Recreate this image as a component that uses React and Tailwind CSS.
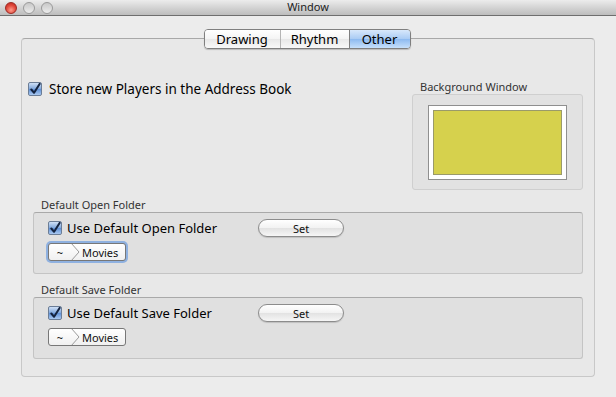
import React from 'react';

const font = { fontFamily: '"Noto Sans", "DejaVu Sans", sans-serif' };

const Light = ({ red }) => (
    <div
        className={
            red
                ? 'w-[12px] h-[12px] rounded-full border border-[#9c2a24] bg-[radial-gradient(circle_at_50%_70%,#ff9c8c,#e0473a_55%,#b8261c)]'
                : 'w-[12px] h-[12px] rounded-full border border-[#9a9a9a] bg-[linear-gradient(#c8c8c8,#ececec)]'
        }
    />
);

const Check = () => (
    <div className="w-[14px] h-[14px] rounded-[2px] border border-[#6b7d96] bg-[linear-gradient(#cfe0f6,#7fa7dc_50%,#5d8fd6_51%,#a9c8f0)] flex items-center justify-center shrink-0">
        <svg width="13" height="13" viewBox="0 0 13 13">
            <path d="M2.5 6.5 L5.5 10 L11.5 0.5" fill="none" stroke="#14233f" strokeWidth="2.2" strokeLinecap="round" strokeLinejoin="round" />
        </svg>
    </div>
);

const SetButton = () => (
    <button className="w-[86px] h-[18px] rounded-full border border-[#8c8c8c] bg-[linear-gradient(#ffffff,#f2f2f2_50%,#e2e2e2_51%,#f6f6f6)] text-[11px] leading-none text-[#111] shadow-[0_1px_1px_rgba(0,0,0,0.15)]">
        Set
    </button>
);

const PathControl = ({ focused }) => (
    <div className={focused ? 'p-[2px] rounded-[5px] bg-[#8fb1e0] w-fit' : 'p-[2px] w-fit'}>
        <div className="flex items-center h-[18px] rounded-[3px] border border-[#777] bg-[linear-gradient(#ffffff,#f0f0f0)] text-[11px] text-[#111] overflow-hidden">
            <span className="w-[22px] text-center leading-none">~</span>
            <svg width="9" height="18" viewBox="0 0 9 18" className="shrink-0">
                <path d="M0 0 L8 9 L0 18" fill="none" stroke="#9a9a9a" strokeWidth="1" />
            </svg>
            <span className="pl-[2px] pr-[7px] leading-none">Movies</span>
        </div>
    </div>
);

const FolderGroup = ({ title, label, focused, top }) => (
    <div className={top}>
        <div className="pl-[8px] text-[11px] leading-[14px] text-[#333]">{title}</div>
        <div className="h-[62px] rounded-[3px] border border-[#c4c4c4] border-t-[#a9a9a9] bg-[#e0e0e0] pl-[14px] pt-[6px]">
            <div className="flex items-center">
                <Check />
                <span className="ml-[5px] w-[191px] text-[13px] leading-[16px] text-black">{label}</span>
                <SetButton />
            </div>
            <div className="mt-[4px] -ml-[2px]">
                <PathControl focused={focused} />
            </div>
        </div>
    </div>
);

export default function App() {
    return (
        <div className="w-[616px] h-[397px] bg-[#ececec] flex flex-col" style={font}>
            <div className="h-[16px] relative flex items-center border-b border-[#6e6e6e] bg-[linear-gradient(#ececec,#cfcfcf_60%,#bdbdbd)]">
                <div className="flex gap-[6px] pl-[5px]">
                    <Light red />
                    <Light />
                    <Light />
                </div>
                <div className="absolute inset-0 flex items-center justify-center text-[11px] text-[#222]">Window</div>
            </div>

            <div className="px-[21px] pt-[13px] flex flex-col">
                <div className="relative z-10 flex justify-center">
                    <div className="ml-[-2px] flex h-[20px] rounded-[4px] border border-[#7f7f7f] overflow-hidden text-[13px] leading-none text-black shadow-[0_1px_1px_rgba(0,0,0,0.2)]">
                        <div className="w-[76px] flex items-center justify-center border-r border-[#b5b5b5] bg-[linear-gradient(#ffffff,#f4f4f4_50%,#e8e8e8_51%,#f8f8f8)]">Drawing</div>
                        <div className="w-[69px] flex items-center justify-center border-r border-[#7f7f7f] bg-[linear-gradient(#ffffff,#f4f4f4_50%,#e8e8e8_51%,#f8f8f8)]">Rhythm</div>
                        <div className="w-[60px] flex items-center justify-center bg-[linear-gradient(#d8e8fb,#a9cbf4_50%,#8dbaf0_51%,#c6e0fb)]">Other</div>
                    </div>
                </div>

                <div className="-mt-[11px] h-[339px] rounded-[4px] border border-[#c8c8c8] border-t-[#a8a8a8] bg-[#e8e8e8] px-[11px] pt-[41px]">
                    <div className="flex justify-between">
                        <div className="-ml-[5px] flex items-center h-[16px] mt-[1px]">
                            <Check />
                            <span className="ml-[7px] text-[13.5px] leading-[16px] text-black">Store new Players in the Address Book</span>
                        </div>
                        <div className="w-[171px]">
                            <div className="pl-[8px] text-[11px] leading-[13px] text-[#333]">Background Window</div>
                            <div className="mt-[1px] h-[96px] rounded-[3px] border border-[#cfcfcf] bg-[#e2e2e2] flex items-center justify-center">
                                <div className="w-[139px] h-[75px] border border-[#8f8f8f] bg-white p-[4px]">
                                    <div className="w-full h-full border border-[#9a9a6a] bg-[#d6d14d]" />
                                </div>
                            </div>
                        </div>
                    </div>

                    <FolderGroup top="mt-[8px]" title="Default Open Folder" label="Use Default Open Folder" focused />
                    <FolderGroup top="mt-[9px]" title="Default Save Folder" label="Use Default Save Folder" />
                </div>
            </div>
        </div>
    );
}
